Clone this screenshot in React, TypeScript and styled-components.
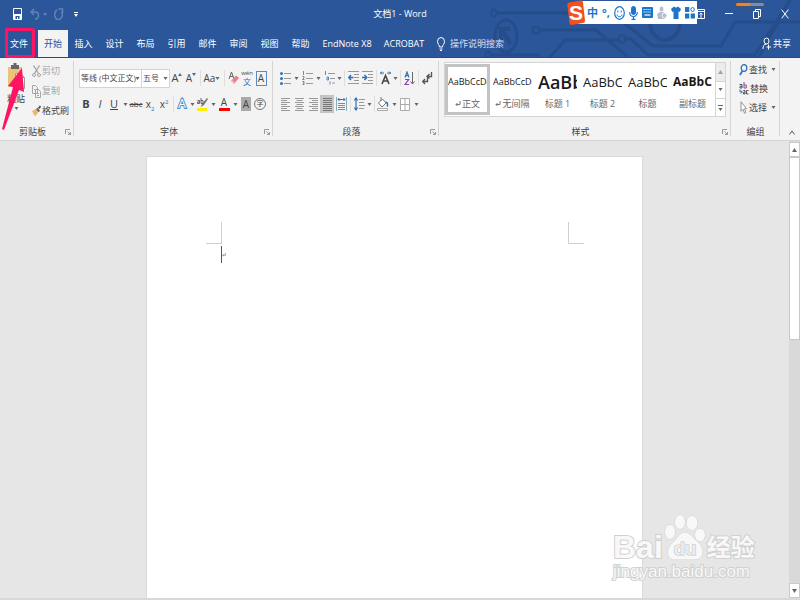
import React from 'react';
import styled, { createGlobalStyle, css } from 'styled-components';

const BLUE = '#2b579a';
const INK = '#444444';
const ACCENT = '#2f73b8';
const MUTED = '#a6a6a6';
const LINE = '#d4d4d4';
const MARK = '#ff1464';

const Global = createGlobalStyle`
  * { box-sizing: border-box; }
  html, body { margin: 0; height: 100%; overflow: hidden; }
  body {
    font-family: "Open Sans", "Noto Sans CJK SC", sans-serif;
    font-size: 9px;
    line-height: 12px;
    color: ${INK};
    background: #e6e6e6;
  }
  button, input, select { font: inherit; color: inherit; margin: 0; padding: 0; border: 0; background: none; }
  svg { display: block; flex: none; }
`;

const Window = styled.div`
  position: relative;
  display: flex;
  flex-direction: column;
  height: 100vh;
`;

/* ---------- header ---------- */

const Header = styled.header`
  position: relative;
  background: ${BLUE};
  color: #fff;
  border-bottom: 1px solid #24498a;
`;

const Circuit = styled.svg`
  position: absolute;
  right: 0;
  top: 0;
`;

const TitleBar = styled.div`
  position: relative;
  display: grid;
  grid-template-columns: 1fr auto 1fr;
  align-items: center;
  height: 30px;
  padding-bottom: 2px;
`;

const QuickAccess = styled.div`
  display: flex;
  align-items: center;
  padding-left: 13px;
  gap: 7px;
`;

const BarButton = styled.button<{ $dim?: boolean }>`
  display: flex;
  align-items: center;
  gap: 3px;
  color: ${p => (p.$dim ? '#6283b8' : '#fff')};
`;

const Title = styled.h1`
  margin: 0;
  font-size: 9px;
  font-weight: 400;
  white-space: pre;
`;

const WindowButtons = styled.div`
  display: flex;
  justify-content: flex-end;
  align-items: center;
  gap: 20px;
  padding-right: 11px;
`;

const TabBar = styled.nav`
  position: relative;
  display: flex;
  align-items: stretch;
  height: 27px;
`;

const Tab = styled.button<{ $w?: number; $active?: boolean }>`
  width: ${p => p.$w ?? 31}px;
  text-align: center;
  white-space: nowrap;
  ${p => p.$active && css`background: #f3f3f3; color: ${BLUE};`}
`;

const TellMe = styled.label`
  display: flex;
  align-items: center;
  gap: 5px;
  padding-left: 7px;
  flex: 1;
  input { width: 80px; outline: 0; }
  input::placeholder { color: #d5dff0; opacity: 1; }
`;

const Share = styled.button`
  display: flex;
  align-items: center;
  gap: 2px;
  padding-right: 9px;
`;

/* ---------- ribbon ---------- */

const Ribbon = styled.div`
  display: grid;
  grid-template-columns: 74px 199px 166px 1fr 49px 20px;
  height: 83px;
  background: #f3f3f3;
  border-bottom: 1px solid ${LINE};
`;

const Group = styled.section`
  display: flex;
  flex-direction: column;
  position: relative;
  min-width: 0;
  &::after {
    content: '';
    position: absolute;
    right: 0;
    top: 3px;
    bottom: 4px;
    width: 1px;
    background: ${LINE};
  }
`;

const GroupBody = styled.div<{ $row?: boolean }>`
  flex: 1;
  display: flex;
  flex-direction: ${p => (p.$row ? 'row' : 'column')};
  min-height: 0;
`;

const GroupLabel = styled.footer<{ $plain?: boolean }>`
  display: flex;
  align-items: center;
  height: 15px;
  margin-bottom: 1px;
  padding: 0 3px 0 ${p => (p.$plain ? 3 : 0)}px;
  span { flex: 1; text-align: center; }
`;

const Commands = styled.div`
  display: flex;
  flex-direction: column;
  gap: 8px;
  padding: 11px 0 0 5px;
`;

const ToolRow = styled.div`
  display: flex;
  align-items: center;
  height: 18px;
`;

const Tool = styled.button<{ $w?: number; $on?: boolean }>`
  display: flex;
  align-items: center;
  justify-content: center;
  flex: none;
  width: ${p => p.$w ?? 14}px;
  height: 18px;
  background: ${p => (p.$on ? '#c5c5c5' : 'none')};
`;

const Letter = styled.span<{ $bold?: boolean; $italic?: boolean; $underline?: boolean; $strike?: boolean; $size?: number }>`
  font-size: ${p => p.$size ?? 11}px;
  font-weight: ${p => (p.$bold ? 700 : 400)};
  font-style: ${p => (p.$italic ? 'italic' : 'normal')};
  text-decoration: ${p => (p.$underline ? 'underline' : p.$strike ? 'line-through' : 'none')};
  sub, sup { font-size: 6px; line-height: 0; color: ${ACCENT}; }
`;

const Divider = styled.i`
  flex: none;
  width: 1px;
  height: 16px;
  margin: 0 1px 0 2px;
  background: #dedede;
`;

const SelectBox = styled.span<{ $w: number }>`
  position: relative;
  display: flex;
  width: ${p => p.$w}px;
  height: 19px;
  border: 1px solid ${LINE};
  background: #fff;
  & + & { border-left: 0; }
  select {
    appearance: none;
    width: 100%;
    padding-left: 1px;
    font-size: 8px;
    outline: 0;
  }
  svg { position: absolute; right: 1px; top: 7px; pointer-events: none; }
`;

const PasteButton = styled.button`
  display: flex;
  flex-direction: column;
  align-items: center;
  gap: 2px;
  width: 32px;
  padding-top: 4px;
  svg + span { margin-top: 1px; }
`;

const CommandList = styled.div<{ $rowHeight: number }>`
  display: flex;
  flex-direction: column;
  padding-top: 3px;
  button { height: ${p => p.$rowHeight}px; }
`;

const Command = styled.button<{ $disabled?: boolean }>`
  display: flex;
  align-items: center;
  gap: 1px;
  white-space: nowrap;
  color: ${p => (p.$disabled ? MUTED : INK)};
`;

const Gallery = styled.div`
  display: flex;
  height: 55px;
  margin: 4px 5px 0;
  border: 1px solid ${LINE};
  background: #fff;
`;

const StyleList = styled.div`
  flex: 1;
  display: grid;
  grid-template-columns: repeat(6, 1fr);
`;

const StyleItem = styled.button<{ $selected?: boolean }>`
  display: flex;
  flex-direction: column;
  align-items: center;
  min-width: 0;
  margin: 1px 0;
  border: 3px solid ${p => (p.$selected ? '#c3c3c3' : 'transparent')};
`;

const Preview = styled.span<{ $size: number; $weight?: number }>`
  display: block;
  width: 100%;
  height: 31px;
  line-height: 30px;
  overflow: hidden;
  text-align: left;
  white-space: nowrap;
  color: #1a1a1a;
  font-size: ${p => p.$size}px;
  font-weight: ${p => p.$weight ?? 400};
`;

const StyleName = styled.span`
  display: flex;
  align-items: center;
  gap: 1px;
  color: #666;
  white-space: nowrap;
`;

const GalleryScroll = styled.div`
  display: grid;
  grid-template-rows: 1fr 1fr 1fr;
  width: 10px;
  border-left: 1px solid ${LINE};
  button { display: flex; align-items: center; justify-content: center; }
  button:first-child { background: #e1e1e1; opacity: 0.6; }
  button + button { border-top: 1px solid ${LINE}; }
`;

const Collapse = styled.button`
  display: flex;
  align-items: flex-end;
  justify-content: center;
  padding: 0 0 5px 4px;
`;

/* ---------- document area ---------- */

const Workspace = styled.main`
  flex: 1;
  display: flex;
  min-height: 0;
`;

const Canvas = styled.div`
  flex: 1;
  display: flex;
  justify-content: center;
  padding-top: 15px;
  border-bottom: 2px solid #d8d8d8;
`;

const Sheet = styled.article`
  width: 497px;
  display: flex;
  justify-content: space-between;
  padding: 65px 58px 0 59px;
  background: #fff;
  border: 1px solid #dadada;
  border-bottom: 0;
`;

const Corner = styled.div<{ $side: 'left' | 'right' }>`
  width: 16px;
  height: 22px;
  border-bottom: 1px solid #cfcfcf;
  border-${p => (p.$side === 'left' ? 'right' : 'left')}: 1px solid #cfcfcf;
`;

const Caret = styled.div`
  display: flex;
  align-items: center;
  width: 8px;
  height: 17px;
  margin: 2px 0 0 15px;
  gap: 1px;
  border-left: 1px solid #555;
`;

const ScrollBar = styled.div`
  display: flex;
  flex-direction: column;
  width: 11px;
  background: #d9d9d9;
  padding: 1px 0 2px;
`;

const ScrollButton = styled.button`
  display: flex;
  align-items: center;
  justify-content: center;
  height: 15px;
  background: #fff;
  border: 1px solid #cacaca;
`;

const Thumb = styled.div`
  flex: 0 1 43%;
  background: #fff;
  border: 1px solid #c6c6c6;
`;

const Track = styled.div`
  flex: 1;
  display: flex;
  flex-direction: column;
`;

/* ---------- things lying over the window ---------- */

const InputBar = styled.div`
  position: absolute;
  top: 0;
  right: 103px;
  display: flex;
  align-items: center;
  height: 25px;
`;

const InputStrip = styled.div`
  display: flex;
  align-items: center;
  justify-content: space-around;
  width: 120px;
  height: 23px;
  margin-left: -8px;
  padding-left: 8px;
  background: #fff;
  color: #1c75c8;
`;

const Glyph = styled.span`
  font-size: 11px;
  line-height: 14px;
  font-weight: 700;
`;

const Badge = styled.svg`
  position: relative;
`;

const Progress = styled.div`
  position: absolute;
  top: 2px;
  right: 35px;
  width: 30px;
  height: 5px;
  border: 1px solid #44536d;
  border-radius: 3px;
  background: linear-gradient(90deg, #f58220 50%, #6f8fc0 50%);
`;

const Highlight = styled.div`
  position: absolute;
  left: 5px;
  top: 28px;
  width: 30px;
  height: 30px;
  border: 3px solid ${MARK};
  border-radius: 2px;
  pointer-events: none;
`;

const Pointer = styled.svg`
  position: absolute;
  left: 0;
  top: 66px;
  pointer-events: none;
`;

const Watermark = styled.div`
  position: absolute;
  right: 44px;
  bottom: 20px;
  width: 143px;
  color: #f8f8f8;
  font-family: "Liberation Sans", "Noto Sans CJK SC", sans-serif;
  -webkit-text-stroke: 2px #d0d0d0;
  paint-order: stroke fill;
  pointer-events: none;
`;

const Brand = styled.div`
  display: flex;
  align-items: flex-end;
  height: 47px;
  margin-bottom: 2px;
  font-size: 32px;
  line-height: 27px;
  font-weight: 700;
`;

const BrandSuffix = styled.span`
  margin-left: 1px;
  font-size: 24px;
`;

const Address = styled.div`
  font-size: 17px;
  line-height: 17px;
  white-space: nowrap;
`;

/* ---------- icons ---------- */

const Drop = () => (
  <svg width="5" height="3" viewBox="0 0 5 3"><path d="M0.5 0h4L2.5 3z" fill="#666" /></svg>
);

const Launcher = () => (
  <svg width="6" height="6" viewBox="0 0 6 6" fill="none" stroke="#999"><path d="M.5 5V.5H5M2.5 2.5l3 3M5.500 3v2.500H3" /></svg>
);

const SaveIcon = () => (
  <svg width="10" height="12" viewBox="0 0 10 12"><path d="M.5.5h8v11h-8z" fill="none" stroke="#fff" /><path d="M.5 6h8v5.500h-8z" fill="#fff" /><path d="M2.500 8h4v3h-4z" fill={BLUE} /><path d="M4 9h1v2H4z" fill="#fff" /></svg>
);

const UndoIcon = () => (
  <svg width="10" height="12" viewBox="0 0 10 12" fill="none" stroke="currentColor" strokeWidth="1.500"><path d="M4 1L1 4l3 3M1 4h4.500a3 3.500 0 0 1 0 7H5" /></svg>
);

const RedoIcon = () => (
  <svg width="10" height="12" viewBox="0 0 10 12" fill="none" stroke="currentColor" strokeWidth="1.500"><path d="M3 2A3.800 5 0 1 0 7.500 3.500M4.500 1h4v4" /></svg>
);

const ReturnMark = ({ size = 6 }: { size?: number }) => (
  <svg width={size} height={size} viewBox="0 0 6 6" fill="none" stroke="#777"><path d="M5 0v3.500H1M2.500 2L1 3.500 2.500 5" /></svg>
);

const PasteIcon = () => (
  <svg width="18" height="28" viewBox="0 0 18 28">
    <path d="M1 5h14v20H1z" fill="#edc27b" />
    <path d="M4 3h2.500V1h3v2H12v4H4z" fill="#666" />
    <path d="M8.500 11.500h5l4 4v11h-9z" fill="#fff" stroke="#999" />
    <path d="M13.500 11.500v4h4" fill="none" stroke="#999" />
  </svg>
);

const CutIcon = () => (
  <svg width="9" height="13" viewBox="0 0 9 13" fill="none" stroke={MUTED}><path d="M1.500.5l5 8M7.500.5l-5 8" strokeWidth="1.400" /><circle cx="2" cy="10" r="1.500" /><circle cx="7" cy="10" r="1.500" /></svg>
);

const CopyIcon = () => (
  <svg width="9" height="13" viewBox="0 0 9 13" fill="#f3f3f3" stroke={MUTED}><path d="M.5.5h3l2 2v6h-5zM3.500 4.500h3l2 2v6h-5z" /><path d="M5 8.500h2M5 10.500h2M2 4.500h1" /></svg>
);

const BrushIcon = () => (
  <svg width="9" height="12" viewBox="0 0 9 12"><path d="M0 6l4-2 2.500 3L3 11.500z" fill="#edb864" /><path d="M4 4l1.500-1 2.500 3-1.500 1z" fill="#555" /><path d="M6.500 3.500L8.500 1" stroke="#555" strokeWidth="2" /></svg>
);

const SizeMark = ({ down = false }: { down?: boolean }) => (
  <svg width="4" height="11" viewBox="0 0 4 11"><path d={down ? 'M0 0h4L2 3z' : 'M0 3h4L2 0z'} fill={ACCENT} /></svg>
);

const EraserIcon = () => (
  <svg width="11" height="14" viewBox="0 0 11 14"><path d="M1 8l2.500-7L6 8M2 5.500h3" fill="none" stroke="#666" /><path d="M3 10l5-5.500 3 2.500-5 6z" fill="#e5808c" /><path d="M3 10l1-1 3 3-1 1z" fill="#f4c3c8" /></svg>
);

const Boxed = styled.span`
  width: 11px;
  height: 15px;
  border: 1px solid #5b8ac0;
  font-size: 10px;
  line-height: 13px;
  text-align: center;
`;

const Shaded = styled.span`
  width: 10px;
  height: 14px;
  background: #aaa;
  font-size: 10px;
  line-height: 14px;
  text-align: center;
`;

const Circled = styled.span`
  width: 12px;
  height: 12px;
  border: 1px solid #777;
  border-radius: 50%;
  font-size: 7px;
  line-height: 9px;
  text-align: center;
`;

const Outlined = styled.span`
  font-size: 12px;
  color: #fff;
  -webkit-text-stroke: 2px #4e8ccb;
  paint-order: stroke fill;
`;

const ColorBar = styled.span<{ $color: string }>`
  width: 11px;
  height: 14px;
  border-bottom: 3px solid ${p => p.$color};
  font-size: 10px;
  line-height: 11px;
  text-align: center;
`;

const Phonetic = styled.span`
  display: grid;
  justify-items: center;
  font-size: 6px;
  line-height: 7px;
  b { font-weight: 400; font-size: 8px; line-height: 10px; color: ${ACCENT}; }
`;

const HighlightIcon = () => (
  <svg width="11" height="14" viewBox="0 0 11 14"><path d="M0 11h10v3H0z" fill="#ffee00" /><path d="M10 1L5 7 3.500 10 7 8l4-6z" fill="#777" /><path d="M.5 3.500h2v3h-2v-1.500h2M4 1v5.500h2V3.500H4" fill="none" stroke="#666" /></svg>
);

const ListIcon = ({ kind }: { kind: 'bullet' | 'number' | 'level' }) => (
  <svg width="11" height="14" viewBox="0 0 11 14">
    <path d={kind === 'level' ? 'M4 2.500h7M6 7.500h5M8 12h3' : 'M4 2.500h7M4 7.500h7M4 12.500h7'} stroke="#999" />
    {kind === 'bullet' && <g fill={ACCENT}><circle cx="1.500" cy="2.500" r="1.500" /><circle cx="1.500" cy="7.500" r="1.500" /><circle cx="1.500" cy="12.500" r="1.500" /></g>}
    {kind === 'number' && <path d="M1.500 0v4M.5 5.500h1.500v1.500L.5 8.500h2M.5 10.500h1.500v3H.5M1 12h1" fill="none" stroke={ACCENT} strokeWidth=".8" />}
    {kind === 'level' && <path d="M1.500 0v4M3 6h1.500v3H3zM6 10.500v3" fill="none" stroke={ACCENT} strokeWidth=".8" />}
  </svg>
);

const IndentIcon = ({ out = false }: { out?: boolean }) => (
  <svg width="11" height="14" viewBox="0 0 11 14" fill="none"><path d="M0 .5h11M6 3.500h5M6 6.500h5M6 9.500h5M0 12.500h11" stroke="#999" /><path d={out ? 'M5.500 6.500H1M3 4L.8 6.500 3 9' : 'M0 6.500h4.500M2.500 4L4.700 6.500 2.500 9'} stroke={ACCENT} strokeWidth="1.600" /></svg>
);

const AsianLayoutIcon = () => (
  <svg width="11" height="14" viewBox="0 0 11 14" fill="none"><path d="M2 13l3.500-8.500L9 13M3.500 10h4" stroke="#444" strokeWidth="1.600" /><path d="M0 2h4M7 2h4M2 .5L.5 2 2 3.500M9 .5L10.500 2 9 3.500" stroke={ACCENT} /></svg>
);

const SortIcon = () => (
  <svg width="11" height="15" viewBox="0 0 11 15" fill="none"><path d="M1 6.500L3 1l2 5.500M1.700 4.700h2.700" stroke={ACCENT} strokeWidth="1.200" /><path d="M1 8.500h3.700L1 13.500h4" stroke="#8e44ad" strokeWidth="1.200" /><path d="M8.500 1v12M6.500 10.500l2 2.500 2-2.500" stroke="#666" /></svg>
);

const MarksIcon = () => (
  <svg width="11" height="14" viewBox="0 0 11 14" fill="none" stroke="#555" strokeWidth="1.300"><path d="M9.500 1v4.500H5.500M7.500 3L5 5.500l2.500 2M5.500 6v4.500H1M3 8L.7 10.500 3 13" /></svg>
);

const AlignIcon = ({ kind }: { kind: 'left' | 'center' | 'right' | 'full' }) => {
  const short = { left: [0, 6], center: [1.5, 6], right: [3, 6], full: [0, 9] }[kind];
  return (
    <svg width="9" height="13" viewBox="0 0 9 13">
      {[0, 2, 4, 6, 8, 10, 12].map((y, i) => (
        <rect key={y} y={y} x={i % 2 ? short[0] : 0} width={i % 2 ? short[1] : 9} height="1" fill={kind === 'full' ? '#777' : '#999'} />
      ))}
    </svg>
  );
};

const DistributeIcon = () => (
  <svg width="11" height="14" viewBox="0 0 11 14" fill="none"><path d="M.5 0v14M10.500 0v14" stroke="#8ab" /><path d="M2 2.500h7M3.500 1L2 2.500 3.500 4M7.500 1L9 2.500 7.500 4" stroke={ACCENT} /><path d="M2 6.500h7M2 8.500h7M2 10.500h7M2 12.500h7" stroke="#888" /></svg>
);

const SpacingIcon = () => (
  <svg width="11" height="14" viewBox="0 0 11 14" fill="none"><path d="M5 2.500h6M5 5.500h5M5 8.500h6M5 11.500h5" stroke="#999" /><path d="M2 1v12M.3 3.500L2 1l1.700 2.500M.3 10.500L2 13l1.700-2.500" stroke={ACCENT} strokeWidth="1.200" /></svg>
);

const BucketIcon = () => (
  <svg width="12" height="14" viewBox="0 0 12 14" fill="none"><path d="M5.500 2L9 6 5 10 1.500 6zM4 0v4" stroke="#777" fill="#fff" /><path d="M9 5c2 1 2 3 1 4.500" stroke={ACCENT} strokeWidth="1.400" /><path d="M.5 11.500h10v2H.5z" fill="#fff" stroke="#aaa" /></svg>
);

const BordersIcon = () => (
  <svg width="10" height="13" viewBox="0 0 10 13" fill="#fff" stroke="#aaa"><path d="M.5.5h9v12h-9zM5 .5v12M.5 6.500h9" /></svg>
);

const FindIcon = () => (
  <svg width="9" height="12" viewBox="0 0 9 12" fill="none" stroke={ACCENT} strokeWidth="1.300"><ellipse cx="5" cy="4" rx="2.800" ry="3.400" /><path d="M3.300 7L1 11" strokeWidth="1.700" /></svg>
);

const ReplaceIcon = () => (
  <svg width="10" height="13" viewBox="0 0 10 13" fill="none"><path d="M.5 2.500h2.500v3.500H1V4.300h2" stroke="#555" /><path d="M5 0v6h2.300V3H5" stroke="#8e44ad" /><path d="M1 7.500v2.500h2M2 8.500L3.300 10 2 11.500" stroke={ACCENT} /><path d="M4.300 8.500H6v3.500H4.500v-1.700H6M9.500 8.500h-2V12h2" stroke="#555" /></svg>
);

const SelectIcon = () => (
  <svg width="9" height="13" viewBox="0 0 9 13"><path d="M2 .8v9.500l2-2 1.500 4 1.300-.8-1.300-3.800h2z" fill="#fff" stroke="#888" strokeWidth=".9" /></svg>
);

const ShareIcon = () => (
  <svg width="9" height="13" viewBox="0 0 9 13" fill="none" stroke="#fff"><ellipse cx="4.500" cy="4" rx="2.500" ry="3" /><path d="M1 12c0-3 1-5 3.500-5M6.500 7.500v5M4.500 10H9" /></svg>
);

const BulbIcon = () => (
  <svg width="8" height="14" viewBox="0 0 8 14" fill="none" stroke="#fff"><path d="M2.500 10c0-2-2-3-2-5.500a3.500 4 0 0 1 7 0C7.500 7 5.500 8 5.500 10zM2.500 12h3M3 13.500h2" /></svg>
);

const ScrollArrow = ({ down = false }: { down?: boolean }) => (
  <svg width="5" height="4" viewBox="0 0 5 4"><path d={down ? 'M0 0h5L2.500 4z' : 'M0 4h5L2.500 0z'} fill="#666" /></svg>
);

const SogouBadge = () => (
  <Badge width="18" height="25" viewBox="0 0 18 25">
    <path d="M2 2.500L14 .5q2 0 2 2l2 18q0 2-2 2.500L4.500 25q-2 0-2-2L.3 5Q0 3 2 2.500z" fill="#f0511f" />
    <text x="9" y="20" textAnchor="middle" fontFamily="Liberation Sans, sans-serif" fontSize="21" fontWeight="700" fill="#fff">S</text>
  </Badge>
);

const InputIcons = () => (
  <>
    <svg width="11" height="14" viewBox="0 0 11 14" fill="none" stroke="currentColor"><ellipse cx="5.500" cy="7" rx="4.800" ry="6.300" strokeWidth="1.200" /><path d="M3 8.500c.5 3 4.500 3 5 0M3.800 4.500v2M7.200 4.500v2" /></svg>
    <svg width="9" height="14" viewBox="0 0 9 14" fill="none" stroke="currentColor"><rect x="2.500" y=".5" width="4" height="8" rx="2" fill="currentColor" /><path d="M.7 6c0 6 7.600 6 7.600 0M4.500 10.500V13M2.500 13.300h4" strokeWidth="1.200" /></svg>
    <svg width="11" height="11" viewBox="0 0 11 11"><rect width="11" height="11" rx="1" fill="currentColor" /><path d="M1.500 2.500h8M1.500 5h8" stroke="#fff" strokeDasharray="1.200 .8" strokeWidth="1.200" /><path d="M2.500 8h6" stroke="#fff" strokeWidth="1.200" /></svg>
    <svg width="10" height="14" viewBox="0 0 10 14" fill="#b6bdcf"><ellipse cx="4.500" cy="3" rx="2" ry="2.500" /><path d="M0 8l3-2h3l2 2v5H1z" /><circle cx="7.500" cy="9.500" r="2.500" stroke="#fff" strokeWidth=".8" /></svg>
    <svg width="10" height="13" viewBox="0 0 10 13" fill="currentColor"><path d="M3 .5q2 2 4 0l3 2.500-1.200 3-1.300-.7V13h-5V5.300L1.200 6 0 3z" /></svg>
    <svg width="10" height="13" viewBox="0 0 10 13"><path d="M0 1h4.300v5H0zM0 7.500h4.300v5H0zM5.700 7.500H10v5H5.700z" fill="currentColor" /><ellipse cx="7.600" cy="3.500" rx="1.700" ry="2" fill="none" stroke="currentColor" /></svg>
  </>
);

const HeaderCircuit = () => (
  <Circuit width="320" height="57" viewBox="480 0 320 57" fill="none" stroke="#254d89" strokeWidth="3" aria-hidden="true">
    <path d="M497 13h71M491 55h49M540 30h56l32 27M550 57l15-17h53M626 39h5l17 16h107l35-55M618 18l35 28h68l14-24h65M759 57l31-57" />
    <ellipse cx="494" cy="13" rx="2.500" ry="3.500" strokeWidth="2" /><ellipse cx="488" cy="55" rx="2.500" ry="3" strokeWidth="2" />
    <ellipse cx="536" cy="30" rx="3.500" ry="3.500" strokeWidth="2" /><ellipse cx="622" cy="39" rx="3" ry="4" strokeWidth="2" />
    <ellipse cx="506" cy="36" rx="11" ry="16" /><path d="M511 44l-9-13M501 42V29h9" strokeWidth="4" />
    <ellipse cx="665" cy="22" rx="15" ry="18" strokeWidth="4" />
  </Circuit>
);

const Paw = () => (
  <svg width="43" height="47" viewBox="0 0 43 47" fill="#f8f8f8" stroke="#d0d0d0">
    <ellipse cx="7" cy="18" rx="5" ry="7" /><ellipse cx="17" cy="8" rx="5" ry="7" /><ellipse cx="29" cy="9" rx="5.500" ry="7" /><ellipse cx="37" cy="21" rx="5" ry="6.500" />
    <path d="M22 18.500c-5 0-7 5-11 9C2 35 4 45.500 12 45.500h20c9 0 10-11 2-18-5-4.500-7-9-12-9z" />
    <text x="22" y="41" textAnchor="middle" fontSize="19" fontWeight="700" fill="#ededed" stroke="#bcbcbc">du</text>
  </svg>
);

/* ---------- page ---------- */

const tabs = ['插入', '设计', '布局', '引用', '邮件', '审阅', '视图', '帮助'];

const styles = [
  { sample: 'AaBbCcDd', name: '正文', size: 9, mark: true, selected: true },
  { sample: 'AaBbCcDd', name: '无间隔', size: 9, mark: true },
  { sample: 'AaBb', name: '标题 1', size: 18, weight: 600 },
  { sample: 'AaBbC', name: '标题 2', size: 13 },
  { sample: 'AaBbC', name: '标题', size: 13 },
  { sample: 'AaBbC', name: '副标题', size: 12, weight: 700 },
];

const DropTool = ({ w, label }: { w: number; label: string }) => (
  <Tool $w={w} aria-label={label}><Drop /></Tool>
);

const ClipboardGroup = () => (
  <Group>
    <GroupBody $row>
      <PasteButton><PasteIcon /><span>粘贴</span><Drop /></PasteButton>
      <CommandList $rowHeight={20}>
        <Command $disabled><CutIcon />剪切</Command>
        <Command $disabled><CopyIcon />复制</Command>
        <Command><BrushIcon />格式刷</Command>
      </CommandList>
    </GroupBody>
    <GroupLabel><span>剪贴板</span><Launcher /></GroupLabel>
  </Group>
);

const FontGroup = () => (
  <Group>
    <GroupBody>
      <Commands>
        <ToolRow>
          <SelectBox $w={63}><select aria-label="字体"><option>等线 (中文正文)</option></select><Drop /></SelectBox>
          <SelectBox $w={28}><select aria-label="字号"><option>五号</option></select><Drop /></SelectBox>
          <Tool><Letter>A</Letter><SizeMark /></Tool>
          <Tool><Letter $size={10}>A</Letter><SizeMark down /></Tool>
          <Divider />
          <Tool $w={20}><Letter $size={10}>Aa</Letter><Drop /></Tool>
          <Divider />
          <Tool aria-label="清除格式"><EraserIcon /></Tool>
          <Tool><Phonetic>wén<b>文</b></Phonetic></Tool>
          <Tool><Boxed>A</Boxed></Tool>
        </ToolRow>
        <ToolRow>
          <Tool><Letter $bold>B</Letter></Tool>
          <Tool><Letter $italic>I</Letter></Tool>
          <Tool><Letter $underline>U</Letter></Tool>
          <DropTool w={8} label="下划线选项" />
          <Tool><Letter $strike $size={8}>abc</Letter></Tool>
          <Tool><Letter $size={10}>x<sub>2</sub></Letter></Tool>
          <Tool><Letter $size={10}>x<sup>2</sup></Letter></Tool>
          <Divider />
          <Tool><Outlined>A</Outlined></Tool>
          <DropTool w={6} label="文本效果选项" />
          <Tool aria-label="突出显示"><HighlightIcon /></Tool>
          <DropTool w={8} label="突出显示颜色" />
          <Tool><ColorBar $color="#ff0000">A</ColorBar></Tool>
          <DropTool w={8} label="字体颜色选项" />
          <Tool><Shaded>A</Shaded></Tool>
          <Tool><Circled>字</Circled></Tool>
        </ToolRow>
      </Commands>
    </GroupBody>
    <GroupLabel><span>字体</span><Launcher /></GroupLabel>
  </Group>
);

const ParagraphGroup = () => (
  <Group>
    <GroupBody>
      <Commands>
        <ToolRow>
          <Tool aria-label="项目符号"><ListIcon kind="bullet" /></Tool>
          <DropTool w={8} label="项目符号库" />
          <Tool aria-label="编号"><ListIcon kind="number" /></Tool>
          <DropTool w={8} label="编号库" />
          <Tool aria-label="多级列表"><ListIcon kind="level" /></Tool>
          <DropTool w={6} label="列表库" />
          <Divider />
          <Tool aria-label="减少缩进量"><IndentIcon out /></Tool>
          <Tool aria-label="增加缩进量"><IndentIcon /></Tool>
          <Divider />
          <Tool aria-label="中文版式"><AsianLayoutIcon /></Tool>
          <DropTool w={6} label="中文版式选项" />
          <Divider />
          <Tool aria-label="排序"><SortIcon /></Tool>
          <Divider />
          <Tool aria-label="显示编辑标记"><MarksIcon /></Tool>
        </ToolRow>
        <ToolRow>
          <Tool aria-label="左对齐"><AlignIcon kind="left" /></Tool>
          <Tool aria-label="居中"><AlignIcon kind="center" /></Tool>
          <Tool aria-label="右对齐"><AlignIcon kind="right" /></Tool>
          <Tool $on aria-label="两端对齐"><AlignIcon kind="full" /></Tool>
          <Tool aria-label="分散对齐"><DistributeIcon /></Tool>
          <Divider />
          <Tool aria-label="行距"><SpacingIcon /></Tool>
          <DropTool w={6} label="行距选项" />
          <Divider />
          <Tool aria-label="底纹"><BucketIcon /></Tool>
          <DropTool w={8} label="底纹颜色" />
          <Tool aria-label="边框"><BordersIcon /></Tool>
          <DropTool w={8} label="边框选项" />
        </ToolRow>
      </Commands>
    </GroupBody>
    <GroupLabel><span>段落</span><Launcher /></GroupLabel>
  </Group>
);

const StylesGroup = () => (
  <Group>
    <GroupBody>
      <Gallery>
        <StyleList>
          {styles.map(s => (
            <StyleItem key={s.name} $selected={s.selected}>
              <Preview $size={s.size} $weight={s.weight}>{s.sample}</Preview>
              <StyleName>{s.mark && <ReturnMark />}{s.name}</StyleName>
            </StyleItem>
          ))}
        </StyleList>
        <GalleryScroll>
          <button aria-label="上一行"><ScrollArrow /></button>
          <button aria-label="下一行"><Drop /></button>
          <button aria-label="其他"><svg width="5" height="6" viewBox="0 0 5 6"><path d="M0 0h5v1H0zM.5 3h4l-2 3z" fill="#666" /></svg></button>
        </GalleryScroll>
      </Gallery>
    </GroupBody>
    <GroupLabel><span>样式</span><Launcher /></GroupLabel>
  </Group>
);

const EditingList = styled(CommandList)`
  padding: 2px 0 0 8px;
  button svg:last-child:not(:first-child) { margin-left: 3px; }
`;

const EditingGroup = () => (
  <Group>
    <GroupBody>
      <EditingList $rowHeight={19}>
        <Command><FindIcon />查找<Drop /></Command>
        <Command><ReplaceIcon />替换</Command>
        <Command><SelectIcon />选择<Drop /></Command>
      </EditingList>
    </GroupBody>
    <GroupLabel $plain><span>编组</span></GroupLabel>
  </Group>
);

export default function App() {
  return (
    <Window lang="zh-CN">
      <Global />
      <Header>
        <HeaderCircuit />
        <TitleBar>
          <QuickAccess>
            <BarButton aria-label="保存"><SaveIcon /></BarButton>
            <BarButton $dim aria-label="撤消">
              <UndoIcon /><svg width="4" height="3" viewBox="0 0 4 3"><path d="M0 0h4L2 3z" fill="currentColor" /></svg>
            </BarButton>
            <BarButton $dim aria-label="恢复"><RedoIcon /></BarButton>
            <BarButton aria-label="自定义快速访问工具栏">
              <svg width="10" height="5" viewBox="0 0 10 5"><path d="M3 0h4v1H3zM3 2h4L5 5z" fill="#fff" /></svg>
            </BarButton>
          </QuickAccess>
          <Title>文档1 - Word</Title>
          <WindowButtons>
            <BarButton aria-label="功能区显示选项"><svg width="8" height="10" viewBox="0 0 8 10" fill="none" stroke="#fff"><path d="M.5.5h7v9h-7zM.5 2.500h7M4 4v5M2.500 5.500L4 4l1.500 1.500" /></svg></BarButton>
            <BarButton aria-label="最小化"><svg width="8" height="2" viewBox="0 0 8 2"><path d="M0 0h8v1H0z" fill="#fff" /></svg></BarButton>
            <BarButton aria-label="还原"><svg width="8" height="10" viewBox="0 0 8 10" fill="none" stroke="#fff"><path d="M.5 2.500h5v7h-5zM2.500 2.500v-2h5v7h-2" /></svg></BarButton>
            <BarButton aria-label="关闭"><svg width="8" height="10" viewBox="0 0 8 10" stroke="#fff"><path d="M.7.7l6.600 8.600M7.300.7L.7 9.300" /></svg></BarButton>
          </WindowButtons>
        </TitleBar>
        <TabBar>
          <Tab $w={38}>文件</Tab>
          <Tab $w={30} $active>开始</Tab>
          {tabs.map(t => <Tab key={t}>{t}</Tab>)}
          <Tab $w={62}>EndNote X8</Tab>
          <Tab $w={52}>ACROBAT</Tab>
          <TellMe><BulbIcon /><input aria-label="操作说明搜索" placeholder="操作说明搜索" /></TellMe>
          <Share><ShareIcon />共享</Share>
        </TabBar>
      </Header>

      <Ribbon>
        <ClipboardGroup />
        <FontGroup />
        <ParagraphGroup />
        <StylesGroup />
        <EditingGroup />
        <Collapse aria-label="折叠功能区"><svg width="6" height="5" viewBox="0 0 6 5" fill="none" stroke="#555"><path d="M.5 4.500L3 1l2.500 3.500" /></svg></Collapse>
      </Ribbon>

      <Workspace>
        <Canvas>
          <Sheet>
            <div>
              <Corner $side="left" />
              <Caret><ReturnMark size={4} /></Caret>
            </div>
            <Corner $side="right" />
          </Sheet>
        </Canvas>
        <ScrollBar>
          <ScrollButton aria-label="向上滚动"><ScrollArrow /></ScrollButton>
          <Track><Thumb /></Track>
          <ScrollButton aria-label="向下滚动"><ScrollArrow down /></ScrollButton>
        </ScrollBar>
      </Workspace>

      <InputBar>
        <SogouBadge />
        <InputStrip>
          <Glyph>中</Glyph>
          <Glyph>°,</Glyph>
          <InputIcons />
        </InputStrip>
      </InputBar>
      <Progress />
      <Highlight />
      <Pointer width="28" height="66" viewBox="0 0 28 66"><path d="M22 2l2 24-5-2L4 64l-2-1L13 21l-5-1z" fill={MARK} /></Pointer>
      <Watermark>
        <Brand>Bai<Paw /><BrandSuffix>经验</BrandSuffix></Brand>
        <Address>jingyan.baidu.com</Address>
      </Watermark>
    </Window>
  );
}
